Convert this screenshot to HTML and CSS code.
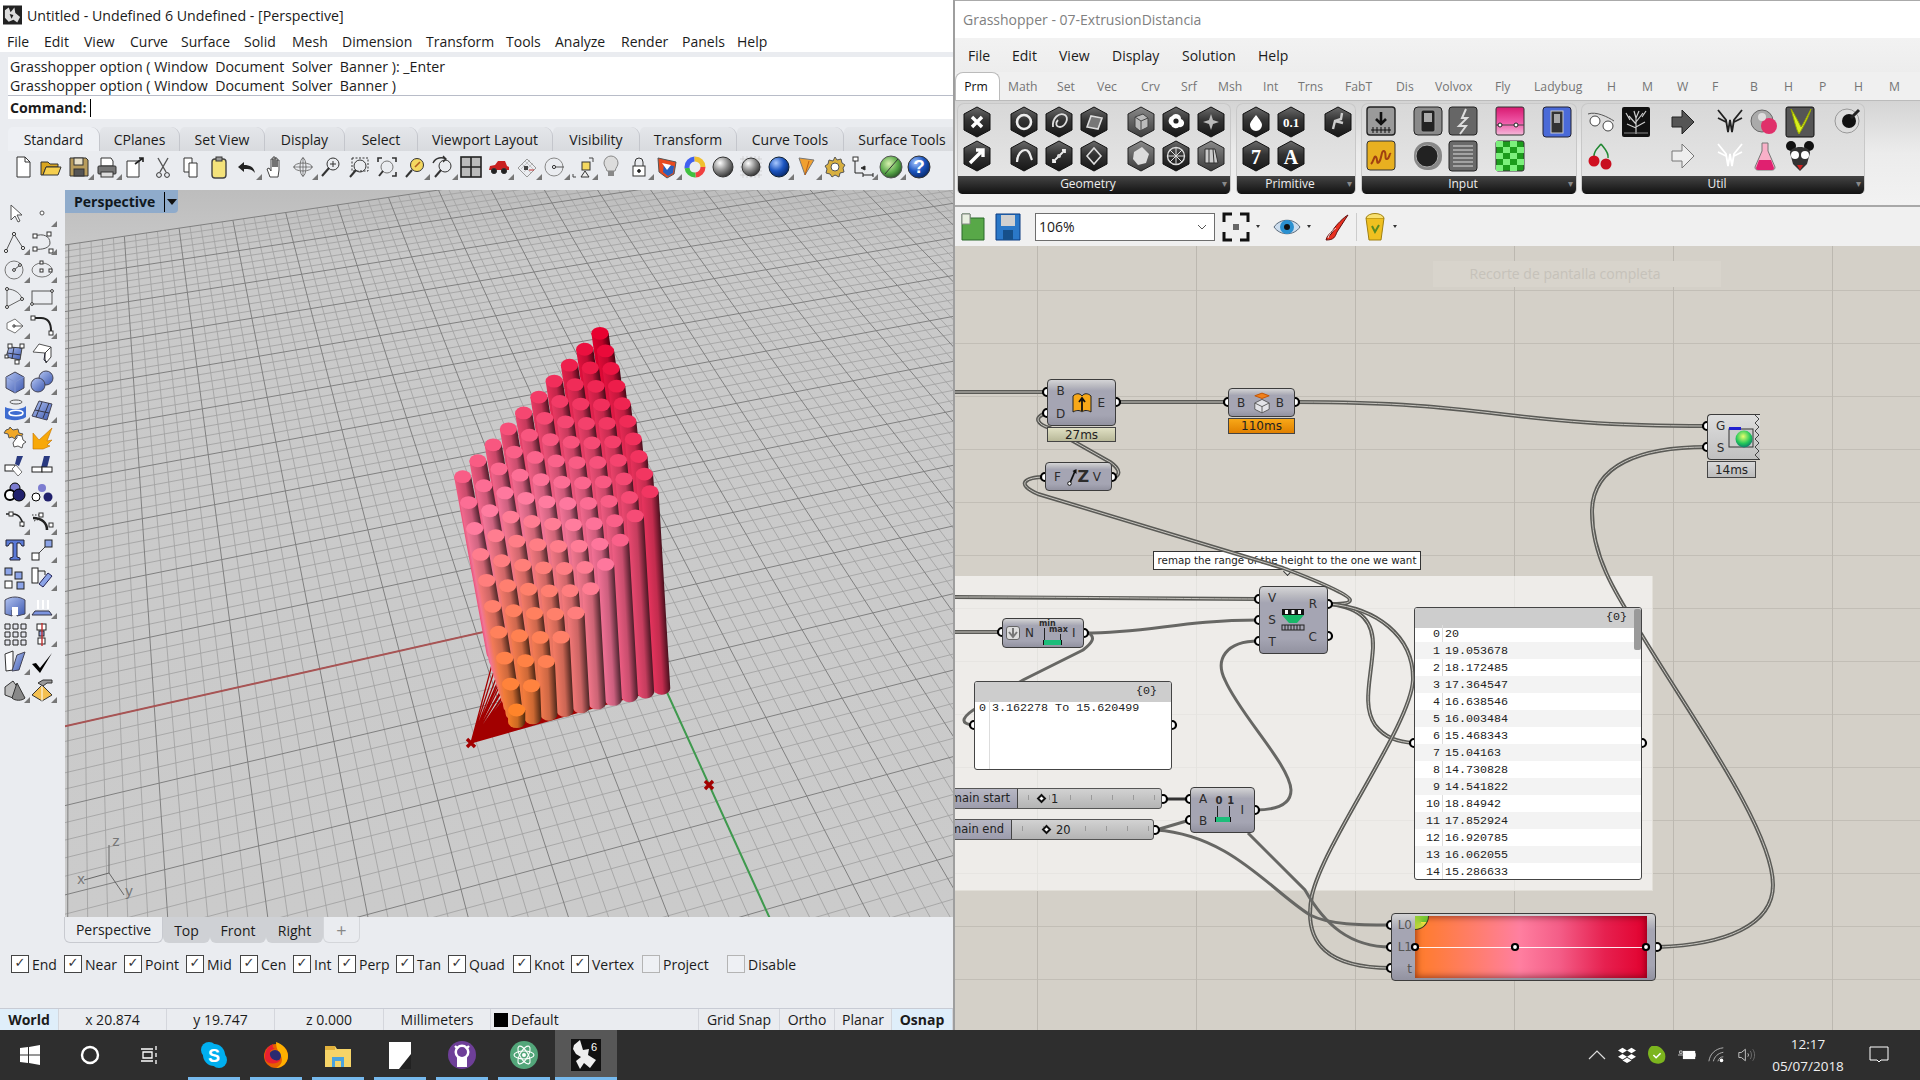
FILE: index.html
```html
<!DOCTYPE html>
<html lang="en">
<head>
<meta charset="utf-8">
<title>Rhino and Grasshopper</title>
<link rel="stylesheet" href="styles.css">
</head>
<body>
<svg class="defs" width="0" height="0">
  <defs>
    <linearGradient id="hexg" x1="0" y1="0" x2="0" y2="1"><stop offset="0" stop-color="#6a6a6a"/><stop offset=".45" stop-color="#333"/><stop offset="1" stop-color="#161616"/></linearGradient>
    <linearGradient id="hexl" x1="0" y1="0" x2="0" y2="1"><stop offset="0" stop-color="#8a8a8a"/><stop offset="1" stop-color="#3c3c3c"/></linearGradient>
    <linearGradient id="blue" x1="0" y1="0" x2="1" y2="1"><stop offset="0" stop-color="#b4c5f2"/><stop offset="1" stop-color="#3c58b0"/></linearGradient>
    <linearGradient id="pinkg" x1="0" y1="0" x2="0" y2="1"><stop offset="0" stop-color="#d81a70"/><stop offset=".55" stop-color="#f058a8"/><stop offset="1" stop-color="#f4b8d8"/></linearGradient>
    <radialGradient id="ball" cx=".35" cy=".3" r=".8"><stop offset="0" stop-color="#fff"/><stop offset=".5" stop-color="#8a8a8a"/><stop offset="1" stop-color="#222"/></radialGradient>
    <radialGradient id="bball" cx=".35" cy=".3" r=".8"><stop offset="0" stop-color="#a8c8ff"/><stop offset=".5" stop-color="#1c55c0"/><stop offset="1" stop-color="#04205c"/></radialGradient>
    <radialGradient id="gball" cx=".4" cy=".35" r=".7"><stop offset="0" stop-color="#d8f0b0"/><stop offset=".6" stop-color="#58a848"/><stop offset="1" stop-color="#244c24"/></radialGradient>
    <radialGradient id="sball" cx=".45" cy=".35" r=".7"><stop offset="0" stop-color="#e8ff70"/><stop offset=".6" stop-color="#22c75a"/><stop offset="1" stop-color="#0a6a70"/></radialGradient>
    <polygon id="hex" points="15,1 28,8 28,24 15,31 2,24 2,8" fill="url(#hexg)" stroke="#111"/>
    <polygon id="hexlt" points="15,1 28,8 28,24 15,31 2,24 2,8" fill="url(#hexl)" stroke="#222"/>
  </defs>
</svg>

<div class="screen">
  <div class="windows">
    <section class="rhino">
      <div class="titlebar">
        <svg class="appicon" viewBox="0 0 20 20"><rect width="20" height="20" fill="#222"/><path d="M2 5l4-3 2 5 4-5 1 6 5 4-3 6-4-3-5 2-4-4z" fill="#ddd"/><path d="M7 9l4 1-2 4z" fill="#222"/></svg>
        <span>Untitled - Undefined 6 Undefined - [Perspective]</span>
      </div>
      <nav class="menu">
        <span>File</span><span>Edit</span><span>View</span><span>Curve</span><span>Surface</span><span>Solid</span><span>Mesh</span><span>Dimension</span><span>Transform</span><span>Tools</span><span>Analyze</span><span>Render</span><span>Panels</span><span>Help</span>
      </nav>
      <div class="cmdwrap">
        <div class="cmd">
          <div class="cmdline">Grasshopper option ( Window&nbsp; Document&nbsp; Solver&nbsp; Banner ): _Enter</div>
          <div class="cmdline cmdline-last">Grasshopper option ( Window&nbsp; Document&nbsp; Solver&nbsp; Banner )</div>
          <div class="cmdprompt"><b>Command:</b><span class="caret"></span></div>
        </div>
      </div>
      <div class="tabs">
        <span class="tab active">Standard</span><span class="tab">CPlanes</span><span class="tab">Set View</span><span class="tab">Display</span><span class="tab">Select</span><span class="tab">Viewport Layout</span><span class="tab">Visibility</span><span class="tab">Transform</span><span class="tab">Curve Tools</span><span class="tab">Surface Tools</span>
      </div>
      <div class="stdbar">
        <i class="ic"><svg viewBox="0 0 24 24"><path d="M6 2h8l5 5v15H6z" fill="#fff"/><path d="M14 2v5h5"/></svg></i>
        <i class="ic"><svg viewBox="0 0 24 24"><path d="M2 7h7l2 2h8v3H7l-3 8H2z" fill="#d9a520"/><path d="M7 12h15l-3 8H4z" fill="#f6cf50"/></svg></i>
        <i class="ic fly"><svg viewBox="0 0 24 24"><path d="M3 3h16l2 2v16H3z" fill="#b89c5c"/><rect x="7" y="3" width="9" height="7" fill="#e8e0c8"/><rect x="7" y="14" width="10" height="7" fill="#555"/></svg></i>
        <i class="ic fly"><svg viewBox="0 0 24 24"><path d="M6 11V3h10l2 3v5z" fill="#fff"/><rect x="3" y="11" width="18" height="8" rx="1" fill="#777"/><rect x="6" y="17" width="12" height="5" fill="#ddd"/></svg></i>
        <i class="ic"><svg viewBox="0 0 24 24"><path d="M4 6h12v16H4z" fill="#fff"/><path d="M12 9l8-6m-4 0h4v4" stroke="#222" stroke-width="1.6"/></svg></i>
        <i class="ic"><svg viewBox="0 0 24 24"><path d="M7 3l8 14m2-14L9 17" stroke="#555" stroke-width="1.4"/><circle cx="8" cy="20" r="2.4"/><circle cx="16" cy="20" r="2.4"/></svg></i>
        <i class="ic"><svg viewBox="0 0 24 24"><path d="M5 3h8v14H5z" fill="#fff"/><path d="M10 8h8v14h-8z" fill="#fff"/></svg></i>
        <i class="ic"><svg viewBox="0 0 24 24"><rect x="5" y="4" width="14" height="19" rx="3" fill="#f4e27a" stroke="#444" stroke-width="1.4"/><rect x="9" y="2" width="6" height="4" fill="#999"/></svg></i>
        <i class="ic fly"><svg viewBox="0 0 24 24"><path d="M3 12l6-5v3c6 0 10 2 11 8-3-4-6-4-11-4v3z" fill="#222" stroke="none"/></svg></i>
        <i class="ic"><svg viewBox="0 0 24 24"><path d="M7 22l-3-8 2-1 2 3V4h2v8-10h2v10V3h2v9-7h2v10l-1 7z" fill="#fff" stroke="#444"/></svg></i>
        <i class="ic fly"><svg viewBox="0 0 24 24"><ellipse cx="12" cy="12" rx="9" ry="4" stroke="#777"/><ellipse cx="12" cy="12" rx="3" ry="9" stroke="#777"/><path d="M12 2v20M2 12h20" stroke="#444" stroke-width=".6"/></svg></i>
        <i class="ic"><svg viewBox="0 0 24 24"><circle cx="14" cy="9" r="6"/><path d="M10 13l-7 8" stroke-width="2"/><path d="M14 6v6m-3-3h6"/></svg></i>
        <i class="ic"><svg viewBox="0 0 24 24"><circle cx="13" cy="11" r="6"/><path d="M9 15l-6 7" stroke-width="2"/><rect x="5" y="3" width="16" height="13" stroke-dasharray="2 1.5"/></svg></i>
        <i class="ic"><svg viewBox="0 0 24 24"><circle cx="12" cy="12" r="6" stroke="#777"/><path d="M8 16l-4 5" stroke-width="2"/><path d="M3 7V3h4m10 0h4v4m0 10v4h-4M7 21" stroke-width="1.6"/></svg></i>
        <i class="ic fly"><svg viewBox="0 0 24 24"><circle cx="14" cy="10" r="6.5" fill="#f4d860"/><path d="M9 15l-6 7" stroke-width="2"/><path d="M12 12l5-5" stroke="#b06020" stroke-width="1.6"/></svg></i>
        <i class="ic fly"><svg viewBox="0 0 24 24"><circle cx="14" cy="11" r="6"/><path d="M10 15l-6 7" stroke-width="2"/><path d="M2 8c3-6 9-6 13-4m-3-3l3 3-3 3" stroke-width="1.4"/></svg></i>
        <i class="ic"><svg viewBox="0 0 24 24"><rect x="2" y="2" width="20" height="20" fill="#bbb" stroke="#222" stroke-width="1.6"/><path d="M12 2v20M2 12h20" stroke="#222" stroke-width="1.6"/></svg></i>
        <i class="ic fly"><svg viewBox="0 0 24 24"><path d="M2 15l1-4 5-1 3-4h7l2 5 2 1v3z" fill="#c82020" stroke="none"/><circle cx="7" cy="16" r="2.6" fill="#222"/><circle cx="17" cy="16" r="2.6" fill="#222"/></svg></i>
        <i class="ic fly"><svg viewBox="0 0 24 24"><path d="M3 13l9-9 9 9-9 9z" stroke="#999"/><path d="M7 9l9 9M10 6l9 9M15 5l-9 9M18 8l-9 9" stroke="#bbb" stroke-width=".8"/><rect x="9" y="11" width="4" height="4" fill="#444" stroke="none"/><path d="M14 15h5" stroke="#c03030"/></svg></i>
        <i class="ic fly"><svg viewBox="0 0 24 24"><circle cx="11" cy="12" r="9" stroke="#888"/><circle cx="11" cy="12" r="1.6"/><path d="M13 12h8" stroke="#555"/></svg></i>
        <i class="ic fly"><svg viewBox="0 0 24 24"><rect x="11" y="7" width="8" height="8" fill="#f4d860"/><path d="M14 16l-4 6h8z" fill="#eee"/><path d="M18 3h4v4M5 22H2v-3" stroke="#444"/></svg></i>
        <i class="ic"><svg viewBox="0 0 24 24"><path d="M8 16c-1-4-3-5-3-8a7 7 0 0 1 14 0c0 3-2 4-3 8z" fill="#dcdcdc" stroke="#888"/><rect x="9" y="16" width="6" height="5" fill="#888" stroke="none"/></svg></i>
        <i class="ic fly"><svg viewBox="0 0 24 24"><rect x="6" y="11" width="12" height="10" fill="#fff"/><path d="M8 11V7a4 4 0 0 1 8 0v4"/><circle cx="12" cy="16" r="1.4" fill="#222"/></svg></i>
        <i class="ic fly"><svg viewBox="0 0 24 24"><path d="M3 3l18 4-2 12-7 4-8-6z" fill="#e84a20" stroke="#555"/><path d="M9 9l10 2-1 7-5 3-5-4z" fill="#2860c0" stroke="none"/><path d="M7 8l9 2-4 5z" fill="#fff" stroke="none"/></svg></i>
        <i class="ic"><svg viewBox="0 0 24 24"><circle cx="12" cy="12" r="8" stroke-width="5" stroke="#f04040" stroke-dasharray="12 38"/><circle cx="12" cy="12" r="8" stroke-width="5" stroke="#40c040" stroke-dasharray="12 38" stroke-dashoffset="-12"/><circle cx="12" cy="12" r="8" stroke-width="5" stroke="#4060f0" stroke-dasharray="13 38" stroke-dashoffset="-24"/><circle cx="12" cy="12" r="8" stroke-width="5" stroke="#f0c030" stroke-dasharray="13 38" stroke-dashoffset="-37"/></svg></i>
        <i class="ic"><svg viewBox="0 0 24 24"><circle cx="12" cy="12" r="10" fill="url(#ball)" stroke="#333"/></svg></i>
        <i class="ic"><svg viewBox="0 0 24 24"><path d="M1 4h22M1 8h22M1 12h22M1 16h22M1 20h22M4 1v22M8 1v22M12 1v22M16 1v22M20 1v22" stroke="#bbb" stroke-width=".5"/><circle cx="12" cy="12" r="9" fill="url(#ball)" stroke="#333"/></svg></i>
        <i class="ic fly"><svg viewBox="0 0 24 24"><circle cx="12" cy="12" r="10" fill="url(#bball)" stroke="#123"/></svg></i>
        <i class="ic fly"><svg viewBox="0 0 24 24"><path d="M4 3l15 2-9 15z" fill="#f0a030" stroke="#777"/><path d="M10 20L14 6" stroke="#c06010"/></svg></i>
        <i class="ic"><svg viewBox="0 0 24 24"><path d="M12 2l2 3 4-1 1 4 3 2-2 3 1 4-4 1-1 4-4-2-3 2-2-3-4-1 1-4-2-3 3-2 1-4 4 1z" fill="#d8b040" stroke="#555"/><circle cx="12" cy="12" r="4" fill="#fff" stroke="#555"/></svg></i>
        <i class="ic fly"><svg viewBox="0 0 24 24"><rect x="2" y="2" width="5" height="4" fill="#fff"/><path d="M4 6v12h8M12 18v4M22 18v4M12 20h10" stroke="#222"/><path d="M10 13l4-2v4z" fill="#222"/></svg></i>
        <i class="ic fly"><svg viewBox="0 0 24 24"><circle cx="12" cy="12" r="11" fill="url(#gball)" stroke="#555"/><path d="M12 12l7-8M12 12l-6 7" stroke="#333"/></svg></i>
        <i class="ic"><svg viewBox="0 0 24 24"><circle cx="12" cy="12" r="11" fill="url(#bball)"/><text x="12" y="18" text-anchor="middle" class="helpq">?</text></svg></i>
      </div>

      <div class="midrow">
        <aside class="sidebar">
          <i class="ic"><svg viewBox="0 0 24 24"><path d="M8 3v15l4-4 3 6 2-1-3-6h5z" fill="#fff" stroke="#555"/></svg></i>
          <i class="ic fly"><svg viewBox="0 0 24 24"><circle cx="12" cy="11" r="2" fill="#fff" stroke="#555"/></svg></i>
          <i class="ic fly"><svg viewBox="0 0 24 24"><path d="M3 21L11 4l9 14" stroke="#555"/><circle cx="3" cy="21" r="1.6" fill="#fff"/><circle cx="11" cy="4" r="1.6" fill="#fff"/><circle cx="20" cy="18" r="1.6" fill="#fff"/></svg></i>
          <i class="ic fly"><svg viewBox="0 0 24 24"><path d="M5 6c8-3 15 0 15 7 0 5-8 7-15 6" stroke="#555"/><rect x="3" y="4" width="4" height="4" fill="#fff"/><rect x="3" y="17" width="4" height="4" fill="#fff"/><rect x="17" y="2" width="4" height="4" fill="#fff"/><rect x="19" y="19" width="4" height="4" fill="#fff"/></svg></i>
          <i class="ic fly"><svg viewBox="0 0 24 24"><circle cx="11" cy="12" r="9" stroke="#777"/><path d="M11 12l6-5" stroke="#444"/><circle cx="11" cy="12" r="1.4" fill="#fff"/><circle cx="17" cy="7" r="1.4" fill="#fff"/></svg></i>
          <i class="ic fly"><svg viewBox="0 0 24 24"><ellipse cx="12" cy="12" rx="10" ry="7" stroke="#777"/><rect x="10" y="3" width="3" height="3" fill="#fff"/><rect x="10" y="11" width="3" height="3" fill="#fff"/><rect x="19" y="11" width="3" height="3" fill="#fff"/></svg></i>
          <i class="ic fly"><svg viewBox="0 0 24 24"><path d="M4 3c8 0 14 5 15 10L4 21z" stroke="#666"/><circle cx="4" cy="3" r="1.5" fill="#fff"/><circle cx="19" cy="13" r="1.5" fill="#fff"/><circle cx="4" cy="21" r="1.5" fill="#fff"/></svg></i>
          <i class="ic fly"><svg viewBox="0 0 24 24"><rect x="2" y="5" width="20" height="13" stroke="#555"/><circle cx="2" cy="18" r="1.4" fill="#fff"/><circle cx="22" cy="5" r="1.4" fill="#fff"/></svg></i>
          <i class="ic fly"><svg viewBox="0 0 24 24"><path d="M12 5l8 7-8 7-8-4V9z" fill="#fff" stroke="#777"/><circle cx="11" cy="12" r="1.2" fill="#fff"/><path d="M11 12h9" stroke="#555"/></svg></i>
          <i class="ic fly"><svg viewBox="0 0 24 24"><path d="M3 4h8c6 0 10 4 10 13" stroke="#222" stroke-width="2"/><rect x="1" y="2" width="4" height="4" fill="#fff"/><rect x="19" y="17" width="4" height="4" fill="#fff"/></svg></i>
          <i class="ic fly"><svg viewBox="0 0 24 24"><path d="M6 5l13 1-2 12-14-3z" fill="url(#blue)" stroke="#444"/><path d="M11 5l-2 12M4 11l14 2" stroke="#334"/><rect x="5" y="2" width="4" height="4" fill="#fff"/><rect x="17" y="2" width="4" height="4" fill="#fff"/><rect x="2" y="13" width="3" height="3" fill="#fff"/><rect x="12" y="18" width="4" height="4" fill="#fff"/></svg></i>
          <i class="ic fly"><svg viewBox="0 0 24 24"><path d="M3 10l6-8 12 3-6 6z" fill="#fff" stroke="#555"/><path d="M15 11l6-6v10l-5 6-1-4z" fill="#fff" stroke="#444"/><path d="M15 11l-1 7 3 2" stroke="#223"/></svg></i>
          <i class="ic fly"><svg viewBox="0 0 24 24"><path d="M3 7l9-5 9 5v11l-9 5-9-5z" fill="url(#blue)" stroke="#445"/><path d="M3 7l9 5 9-5M12 12v11" stroke="#8094d0"/></svg></i>
          <i class="ic fly"><svg viewBox="0 0 24 24"><circle cx="16" cy="8" r="7" fill="url(#blue)" stroke="#445"/><circle cx="8" cy="15" r="7" fill="url(#blue)" stroke="#445"/></svg></i>
          <i class="ic fly"><svg viewBox="0 0 24 24"><ellipse cx="13" cy="4" rx="6" ry="2" stroke="#555"/><path d="M2 9c6 3 17 3 21-1v11c-5 4-16 4-21 1z" fill="#3e6cd0" stroke="none"/><ellipse cx="13" cy="15" rx="7" ry="2.8" stroke="#fff" stroke-width="1.6"/></svg></i>
          <i class="ic fly"><svg viewBox="0 0 24 24"><path d="M9 3l13 3-5 16L2 18z" fill="url(#blue)" stroke="#445"/><path d="M12 4l-6 15M19 5l-6 15M5 12l14 3" stroke="#334"/></svg></i>
          <i class="ic"><svg viewBox="0 0 24 24"><path d="M7 1l3 3 5-1 1 4 4 1-2 3-5-1-1 3-3-2-3 1-1-4-4-1 2-3 3-1z" fill="#f0a828" stroke="#555"/><path d="M14 9l5 1 1 4 3 2-3 2-1 4-4-2-4 1-1-4 2-3 2-2z" fill="#fff" stroke="#555"/></svg></i>
          <i class="ic"><svg viewBox="0 0 24 24"><path d="M3 23V7l6 7L22 2 17 15l5-1-5 5 3 1-7 3z" fill="#f8a808" stroke="#c07000" stroke-width=".6"/></svg></i>
          <i class="ic"><svg viewBox="0 0 24 24"><path d="M14 2h6l-4 10-4-2z" fill="#2a3a80" stroke="none"/><rect x="2" y="11" width="10" height="6" fill="#fff" stroke="#222"/><path d="M13 11l6 7-4 4-6-7z" fill="#fff" stroke="#777"/></svg></i>
          <i class="ic"><svg viewBox="0 0 24 24"><path d="M14 2h6l-3 12h-6z" fill="#2a3a80" stroke="none"/><rect x="2" y="13" width="10" height="5" fill="#fff" stroke="#222"/><rect x="12" y="13" width="10" height="5" fill="#fff" stroke="#222"/></svg></i>
          <i class="ic fly"><svg viewBox="0 0 24 24"><circle cx="12" cy="6" r="5" fill="#7c7cd0" stroke="#000"/><circle cx="7" cy="13" r="5" fill="#fff" stroke="#000" stroke-width="2"/><circle cx="16" cy="13" r="6" fill="#20206c" stroke="#000"/></svg></i>
          <i class="ic fly"><svg viewBox="0 0 24 24"><circle cx="12" cy="6" r="4" fill="#7c7cd0" stroke="none"/><circle cx="6" cy="15" r="4" fill="#fff" stroke="#000"/><circle cx="18" cy="15" r="4.5" fill="#20206c" stroke="none"/></svg></i>
          <i class="ic fly"><svg viewBox="0 0 24 24"><path d="M3 4h7c6 0 10 6 10 13" stroke="#222" stroke-width="1.6"/><rect x="6" y="2" width="4" height="4" fill="#fff"/><rect x="17" y="12" width="4" height="4" fill="#fff"/></svg></i>
          <i class="ic fly"><svg viewBox="0 0 24 24"><path d="M2 5h8M4 11c8-4 13 1 13 10" stroke-dasharray="1.5 1.5"/><path d="M3 8c9 0 14 5 14 12" stroke="#222" stroke-width="2.6"/><rect x="9" y="3" width="4" height="4" fill="#fff"/><rect x="19" y="13" width="4" height="4" fill="#fff"/></svg></i>
          <i class="ic"><svg viewBox="0 0 24 24"><path d="M3 2h18v6h-2l-2-3h-3v14l3 1v2H7v-2l3-1V5H7L5 8H3z" fill="#5a7ad8" stroke="#223"/></svg></i>
          <i class="ic fly"><svg viewBox="0 0 24 24"><rect x="2" y="15" width="7" height="7" fill="#fff" stroke="#222"/><path d="M9 15l8-8" stroke="#444"/><rect x="15" y="2" width="7" height="7" fill="#8ca4e8" stroke="#222"/></svg></i>
          <i class="ic"><svg viewBox="0 0 24 24"><rect x="2" y="2" width="7" height="7" fill="#8ca4e8" stroke="#222"/><rect x="12" y="6" width="7" height="7" fill="#8ca4e8" stroke="#222"/><rect x="2" y="15" width="7" height="7" fill="#fff" stroke="#222"/><rect x="14" y="16" width="7" height="7" fill="#8ca4e8" stroke="#222"/></svg></i>
          <i class="ic fly"><svg viewBox="0 0 24 24"><rect x="2" y="2" width="6" height="15" fill="#fff" stroke="#222"/><path d="M13 21l9-11-4-3-9 11z" fill="#8ca4e8" stroke="#225"/><path d="M8 5h7v4" stroke="#222"/></svg></i>
          <i class="ic fly"><svg viewBox="0 0 24 24"><path d="M2 6c6-4 14-4 20 0v14l-8 2v-6H9v6l-7-2z" fill="url(#blue)" stroke="#445"/><rect x="9" y="13" width="6" height="8" fill="#fff" stroke="none"/></svg></i>
          <i class="ic fly"><svg viewBox="0 0 24 24"><path d="M2 21h20l-3-4H5z" fill="#7c94e0" stroke="#334"/><path d="M8 6v9M13 6v9M18 6v9" stroke="#fff" stroke-width="2"/></svg></i>
          <i class="ic"><svg viewBox="0 0 24 24"><path d="M2 2h5v5H2zM10 2h5v5h-5zM18 2h5v5h-5zM2 10h5v5H2zM10 10h5v5h-5zM18 10h5v5h-5zM2 18h5v5H2zM10 18h5v5h-5zM18 18h5v5h-5z" fill="#e4e6ee" stroke="#222"/></svg></i>
          <i class="ic fly"><svg viewBox="0 0 24 24"><rect x="7" y="2" width="9" height="6" fill="#fff" stroke="#222"/><rect x="9" y="9" width="5" height="5" fill="#8ca4e8" stroke="#222"/><rect x="8" y="16" width="7" height="6" fill="#fff" stroke="#222"/><path d="M12 1v23" stroke="#c03030" stroke-width="1.4"/></svg></i>
          <i class="ic fly"><svg viewBox="0 0 24 24"><path d="M2 4l8-3v19L3 21z" fill="#fff" stroke="#333"/><path d="M9 21l5-16 8-3-6 18z" fill="url(#blue)" stroke="#445"/></svg></i>
          <i class="ic"><svg viewBox="0 0 24 24"><path d="M2 14l4-1 4 5L22 3 10 23z" fill="#000" stroke="none"/></svg></i>
          <i class="ic fly"><svg viewBox="0 0 24 24"><path d="M2 9l8-6 5 7-5 10-8-3z" fill="#bbb" stroke="#333"/><path d="M14 5l8 15c-3 3-10 3-13 0z" fill="#888" stroke="#333"/></svg></i>
          <i class="ic fly"><svg viewBox="0 0 24 24"><path d="M12 7L2 17l10 6 10-6z" fill="#f4c050" stroke="#333"/><path d="M12 7v16" stroke="#fff"/><path d="M8 5l5-3h9v3h-5l-4 3z" fill="#999" stroke="#333"/></svg></i>
        </aside>
        <div class="viewport">
          <svg id="scene" class="scene" viewBox="65 190 888 727"></svg>
          <div class="vp-tab"><span>Perspective</span><span class="vp-drop"></span></div>
        </div>
      </div>
      <div class="viewtabs">
        <span class="vtab active">Perspective</span><span class="vtab">Top</span><span class="vtab">Front</span><span class="vtab">Right</span><span class="vtab vtab-plus">+</span>
      </div>
      <div class="osnap">
        <label class="snap on">End</label><label class="snap on">Near</label><label class="snap on">Point</label><label class="snap on">Mid</label><label class="snap on">Cen</label><label class="snap on">Int</label><label class="snap on">Perp</label><label class="snap on">Tan</label><label class="snap on">Quad</label><label class="snap on">Knot</label><label class="snap on">Vertex</label><label class="snap">Project</label><label class="snap">Disable</label>
      </div>
      <div class="status">
        <span class="st st-on"><b>World</b></span><span class="st">x 20.874</span><span class="st">y 19.747</span><span class="st">z 0.000</span><span class="st">Millimeters</span><span class="st st-layer"><i class="swatch"></i>Default</span><span class="st">Grid Snap</span><span class="st">Ortho</span><span class="st">Planar</span><span class="st st-on"><b>Osnap</b></span>
      </div>
    </section>

    <section class="gh">
      <div class="gh-title">Grasshopper - 07-ExtrusionDistancia</div>
      <nav class="gh-menu"><span>File</span><span>Edit</span><span>View</span><span>Display</span><span>Solution</span><span>Help</span></nav>
      <div class="gh-tabs">
        <span class="gh-tab active">Prm</span><span>Math</span><span>Set</span><span>Vec</span><span>Crv</span><span>Srf</span><span>Msh</span><span>Int</span><span>Trns</span><span>FabT</span><span>Dis</span><span>Volvox</span><span>Fly</span><span>Ladybug</span><span>H</span><span>M</span><span>W</span><span>F</span><span>B</span><span>H</span><span>P</span><span>H</span><span>M</span>
      </div>
      <div class="ribbon">
        <div class="rpanel rp-geo">
          <div class="rbody">
            <div class="rgroup">
              <i class="ri"><svg viewBox="0 0 30 32"><use href="#hex"/><path d="M10 11l10 10m0-10L10 21" stroke="#fff" stroke-width="3.4"/></svg></i>
              <i class="ri"><svg viewBox="0 0 30 32"><use href="#hex"/><path d="M8 23L21 10m-7 0h7v7" stroke="#fff" stroke-width="3.4"/></svg></i>
            </div>
            <div class="rgroup">
              <i class="ri"><svg viewBox="0 0 30 32"><use href="#hex"/><circle cx="15" cy="16" r="7" stroke="#eee" stroke-width="2.6"/></svg></i>
              <i class="ri"><svg viewBox="0 0 30 32"><use href="#hex"/><path d="M8 22c0-8 5-12 8-12 5 0 5 6 7 10" stroke="#eee" stroke-width="2.2"/></svg></i>
              <i class="ri"><svg viewBox="0 0 30 32"><use href="#hex"/><path d="M9 21C8 12 15 6 21 9c4 3 1 11-5 12-4 0-5-4-2-7" stroke="#ddd" stroke-width="1.8"/></svg></i>
              <i class="ri"><svg viewBox="0 0 30 32"><use href="#hex"/><path d="M9 22L21 10m-3 0h3v3M9 19v3h3" stroke="#eee" stroke-width="1.8"/><circle cx="15" cy="16" r="2" fill="#ddd"/></svg></i>
              <i class="ri"><svg viewBox="0 0 30 32"><use href="#hex"/><path d="M8 21l4-11 11 2-4 11z" stroke="#ddd" stroke-width="1.6" fill="#777"/></svg></i>
              <i class="ri"><svg viewBox="0 0 30 32"><use href="#hex"/><path d="M15 8l7 8-7 8-7-8z" stroke="#ddd" stroke-width="1.6"/></svg></i>
            </div>
            <div class="rgroup">
              <i class="ri"><svg viewBox="0 0 30 32"><use href="#hexlt"/><path d="M9 11l8-3 5 4v9l-8 4-5-4z" fill="#bbb" stroke="#444"/><path d="M9 11l6 4 7-3M15 15v10" stroke="#444"/></svg></i>
              <i class="ri"><svg viewBox="0 0 30 32"><use href="#hexlt"/><path d="M8 12l8-5 7 7-3 9-8 2-5-6z" fill="#ddd"/></svg></i>
              <i class="ri"><svg viewBox="0 0 30 32"><use href="#hex"/><path d="M11 10a5 5 0 0 1 9 3 4 4 0 0 1-2 8 5 5 0 0 1-8-2 5 5 0 0 1 1-9z" fill="#fff"/><circle cx="15" cy="15" r="2.6" fill="#222"/></svg></i>
              <i class="ri"><svg viewBox="0 0 30 32"><use href="#hex"/><circle cx="15" cy="16" r="8.5" stroke="#ddd" stroke-width="1.4"/><path d="M15 7v18M7 16h16M9 10l12 12M21 10L9 22" stroke="#ddd"/></svg></i>
              <i class="ri"><svg viewBox="0 0 30 32"><use href="#hex"/><path d="M15 8l2 6 6 2-6 2-2 6-2-6-6-2 6-2z" fill="#bbb"/></svg></i>
              <i class="ri"><svg viewBox="0 0 30 32"><use href="#hexlt"/><path d="M9 9h10l3 14H9z" fill="#ccc" stroke="#333"/><path d="M13 9v14M17 9l1 14" stroke="#333"/></svg></i>
            </div>
          </div>
          <div class="rlabel">Geometry</div>
        </div>
        <div class="rpanel rp-pri">
          <div class="rbody">
            <div class="rgroup">
              <i class="ri"><svg viewBox="0 0 30 32"><use href="#hex"/><path d="M15 9c4 5 6 8 6 10a6 6 0 0 1-12 0c0-3 3-6 6-10z" fill="#fff"/></svg></i>
              <i class="ri"><svg viewBox="0 0 30 32"><use href="#hex"/><text x="15" y="24" class="hxt">7</text></svg></i>
              <i class="ri"><svg viewBox="0 0 30 32"><use href="#hex"/><text x="15" y="21" class="hxt hxs">0.1</text></svg></i>
              <i class="ri"><svg viewBox="0 0 30 32"><use href="#hex"/><text x="15" y="24" class="hxt">A</text></svg></i>
            </div>
            <div class="rgroup">
              <i class="ri"><svg viewBox="0 0 30 32"><use href="#hex"/><path d="M10 23l2-8 6-2 1-6M12 15l8 2" stroke="#ccc" stroke-width="2.4"/></svg></i>
              <i class="ri"></i>
            </div>
          </div>
          <div class="rlabel">Primitive</div>
        </div>
        <div class="rpanel rp-inp">
          <div class="rbody">
            <div class="rgroup">
              <i class="ri"><svg viewBox="0 0 30 32"><rect x="1" y="1" width="28" height="28" rx="3" fill="#9a9a9a" stroke="#222" stroke-width="1.4"/><path d="M15 6v12m-5-5l5 5 5-5" stroke="#111" stroke-width="2.6"/><path d="M5 24h20M7 21v6M11 21v6M15 21v6M19 21v6M23 21v6" stroke="#111"/></svg></i>
              <i class="ri"><svg viewBox="0 0 30 32"><rect x="1" y="1" width="28" height="29" rx="3" fill="#e8b020" stroke="#333"/><path d="M5 24c3-3 3-9 5-7s0 8 3 5 2-12 5-11 0 9 3 8 2-6 4-5" stroke="#a04010" stroke-width="2"/></svg></i>
            </div>
            <div class="rgroup">
              <i class="ri"><svg viewBox="0 0 30 32"><rect x="1" y="1" width="28" height="28" rx="4" fill="#8a8a8a" stroke="#222"/><rect x="8" y="4" width="14" height="22" rx="2" fill="#222" stroke="#999"/><rect x="11" y="7" width="8" height="9" fill="#aaa"/></svg></i>
              <i class="ri"><svg viewBox="0 0 30 32"><rect x="1" y="2" width="28" height="28" rx="13" fill="#888"/><circle cx="14" cy="16" r="11" fill="#222" stroke="#aaa"/></svg></i>
              <i class="ri"><svg viewBox="0 0 30 32"><rect x="1" y="1" width="28" height="28" rx="3" fill="#666" stroke="#222"/><path d="M18 3l-4 9h5l-8 8h7l-6 8" stroke="#ddd" stroke-width="2"/></svg></i>
              <i class="ri"><svg viewBox="0 0 30 32"><rect x="1" y="1" width="28" height="30" rx="3" fill="#6a6a6a" stroke="#222"/><path d="M5 8h20M5 16h20M5 24h20" stroke="#ddd" stroke-width="5"/><path d="M5 8h20M5 16h20M5 24h20" stroke="#666" stroke-width="3"/></svg></i>
            </div>
            <div class="rgroup">
              <i class="ri"><svg viewBox="0 0 30 32"><rect x="1" y="1" width="28" height="28" rx="2" fill="url(#pinkg)" stroke="#333"/><path d="M1 19h28" stroke="#444"/><circle cx="5" cy="19" r="2" fill="#fff" stroke="#222"/><circle cx="21" cy="19" r="2" fill="#fff" stroke="#222"/></svg></i>
              <i class="ri"><svg viewBox="0 0 30 32"><rect x="1" y="1" width="28" height="30" rx="2" fill="#1c9c1c" stroke="#333"/><path d="M1 1h7v6H1zM15 1h7v6h-7zM8 7h7v6H8zM22 7h7v6h-7zM1 13h7v6H1zM15 13h7v6h-7zM8 19h7v6H8zM22 19h7v6h-7zM1 25h7v6H1zM15 25h7v6h-7z" fill="#7cf07c"/></svg></i>
            </div>
            <div class="rgroup">
              <i class="ri"><svg viewBox="0 0 30 32"><rect x="1" y="1" width="28" height="30" rx="3" fill="#4a6ad8" stroke="#223"/><rect x="9" y="5" width="12" height="22" fill="#333" stroke="#ccc"/><rect x="12" y="8" width="6" height="9" fill="#aaa"/></svg></i>
              <i class="ri"></i>
            </div>
          </div>
          <div class="rlabel">Input</div>
        </div>
        <div class="rpanel rp-utl">
          <div class="rbody">
            <div class="rgroup">
              <i class="ri"><svg viewBox="0 0 30 32"><path d="M2 8c8-3 20 3 26 7" stroke="#555"/><circle cx="9" cy="15" r="5" fill="#fff" stroke="#444"/><circle cx="22" cy="20" r="5" fill="#fff" stroke="#444"/></svg></i>
              <i class="ri"><svg viewBox="0 0 30 32"><path d="M15 4c-3 4-7 6-7 12M15 4c3 4 8 8 7 14" stroke="#283" stroke-width="1.6"/><circle cx="8" cy="21" r="5.5" fill="#d01020"/><circle cx="20" cy="24" r="5.5" fill="#c81020"/></svg></i>
              <i class="ri"><svg viewBox="0 0 30 32"><rect x="1" y="1" width="28" height="30" rx="2" fill="#111"/><path d="M15 28V12M15 18l-7-8M15 16l7-9M15 22l-9-4M15 21l9-5M9 14L5 7M21 11l4-6M15 12l-2-7M15 12l3-7" stroke="#ccc" stroke-width="1.2"/><path d="M3 27h24" stroke="#888"/></svg></i>
              <i class="ri"></i>
            </div>
            <div class="rgroup">
              <i class="ri"><svg viewBox="0 0 30 32"><path d="M4 11h10V4l12 12-12 12v-7H4z" fill="#555" stroke="#222"/></svg></i>
              <i class="ri"><svg viewBox="0 0 30 32"><path d="M4 11h10V4l12 12-12 12v-7H4z" fill="#eee" stroke="#777"/></svg></i>
            </div>
            <div class="rgroup">
              <i class="ri"><svg viewBox="0 0 30 32"><path d="M3 4l8 10 2 12 2-12 2 12 2-12 8-10M3 12l8 4m16-4l-8 4" stroke="#222" stroke-width="1.8"/></svg></i>
              <i class="ri"><svg viewBox="0 0 30 32"><path d="M3 4l8 10 2 12 2-12 2 12 2-12 8-10M3 12l8 4m16-4l-8 4" stroke="#fff" stroke-width="1.8"/></svg></i>
              <i class="ri"><svg viewBox="0 0 30 32"><circle cx="12" cy="15" r="11" fill="#aaa" stroke="#666"/><circle cx="19" cy="20" r="8" fill="#e0306a"/><circle cx="12" cy="11" r="4" fill="#ddd"/></svg></i>
              <i class="ri"><svg viewBox="0 0 30 32"><path d="M12 3h6v8l7 16c0 2-1 3-3 3H8c-2 0-3-1-3-3l7-16z" fill="#f8b0c8" stroke="#777"/><path d="M9 20h12l3 8c0 1-1 2-2 2H8c-1 0-2-1-2-2z" fill="#e02070"/></svg></i>
              <i class="ri"><svg viewBox="0 0 30 32"><rect x="1" y="1" width="28" height="30" rx="2" fill="#555" stroke="#111"/><path d="M6 3c3 10 5 20 8 25 3-5 9-15 12-25-5 9-8 16-10 18C14 17 10 9 6 3z" fill="#d8f020" stroke="#9a0"/></svg></i>
              <i class="ri"><svg viewBox="0 0 30 32"><circle cx="6" cy="6" r="5" fill="#111"/><circle cx="24" cy="6" r="5" fill="#111"/><path d="M5 13c0-8 20-8 20 0l-3 11-7 7-7-7z" fill="#333"/><circle cx="10" cy="15" r="4" fill="#fff"/><circle cx="20" cy="15" r="4" fill="#fff"/><path d="M12 25h6l-3 5z" fill="#d02020"/></svg></i>
            </div>
            <div class="rgroup">
              <i class="ri"><svg viewBox="0 0 30 32"><circle cx="15" cy="15" r="12" fill="#ddd" stroke="#999"/><circle cx="17" cy="15" r="7" fill="#111"/><path d="M19 12l8-8" stroke="#222" stroke-width="3"/></svg></i>
              <i class="ri"></i>
            </div>
          </div>
          <div class="rlabel">Util</div>
        </div>
      </div>
      <div class="gh-tools">
        <svg class="tool t-open" viewBox="0 0 26 30"><path d="M2 2h8v4h14v22H2z" fill="#58a848" stroke="#2a6a2a"/><path d="M2 2h8v10H2z" fill="#e8f0e0" stroke="#888"/></svg>
        <svg class="tool t-save" viewBox="0 0 26 30"><path d="M1 2h24v26H1z" fill="#2a78c8" stroke="#0a3a80"/><rect x="6" y="3" width="14" height="11" fill="#d0d0d0"/><rect x="8" y="18" width="10" height="10" fill="#16508a"/></svg>
        <div class="combo"><span>106%</span><svg viewBox="0 0 10 6"><path d="M1 1l4 4 4-4" stroke="#555" fill="none"/></svg></div>
        <svg class="tool t-fit" viewBox="0 0 28 30"><path d="M2 10V2h8M18 2h8v8M26 20v8h-8M10 28H2v-8" stroke="#111" stroke-width="3" fill="none"/><rect x="11" y="12" width="6" height="6" fill="#666"/></svg><i class="tdrop"></i>
        <svg class="tool t-eye" viewBox="0 0 28 26"><path d="M1 13c6-9 20-9 26 0-6 9-20 9-26 0z" fill="#cde" stroke="#567"/><circle cx="14" cy="13" r="7" fill="#2a90d0"/><circle cx="14" cy="13" r="3" fill="#111"/></svg><i class="tdrop"></i>
        <svg class="tool t-brush" viewBox="0 0 28 30"><path d="M3 28c8 0 9-3 11-8l11-17c-4 2-12 10-15 15-2 3-6 5-7 10z" fill="#e83020" stroke="#601010"/><path d="M5 26c2-6 6-8 8-10" stroke="#fdd"/></svg>
        <span class="tsep"></span>
        <svg class="tool t-bin" viewBox="0 0 24 30"><path d="M3 6h18l-3 22H6z" fill="#f0c020" stroke="#a08010"/><path d="M3 6c2-6 16-6 18 0" fill="#f8e070" stroke="#a08010"/><path d="M9 14l3 6 4-7" stroke="#5a8a20" stroke-width="2" fill="none"/></svg><i class="tdrop"></i>
      </div>

      <div class="canvas">
        <div class="toast">Recorte de pantalla completa</div>
        <div class="group"></div>
        <div class="tooltip">remap the range of the height to the one we want<i class="tooltip-tip"></i></div>

        <svg class="wires" viewBox="955 246 965 784">
          <defs>
            <path id="w1" d="M955 392H1047"/>
            <path id="w2" d="M1116 402H1228"/>
            <path id="w3" d="M1295 402C1500 402 1500 426 1707 426"/>
            <path id="w4" d="M1047 413C1032 417 1038 425 1050 428L1110 462C1122 470 1120 477 1112 477"/>
            <path id="w5" d="M1045 477C1025 477 1015 484 1038 494L1283 568C1320 582 1350 595 1350 600C1350 604 1340 604 1328 604"/>
            <path id="w6" d="M955 597C1100 597 1200 599 1259 599"/>
            <path id="w7" d="M955 632H1002"/>
            <path id="w8" d="M1330 604C1362 608 1374 622 1373 648C1371 680 1362 705 1375 725C1385 738 1398 742 1414 743"/>
            <path id="w9" d="M1330 604C1375 608 1414 635 1413 680C1411 725 1325 840 1312 895C1302 945 1330 968 1391 968"/>
            <path id="w10" d="M1658 947C1725 945 1773 925 1773 885C1773 830 1690 715 1643 637C1620 600 1592 560 1592 512C1592 465 1640 447 1707 447"/>
          </defs>
          <use href="#w1" class="wo"/><use href="#w1" class="wi"/>
          <use href="#w2" class="wo"/><use href="#w2" class="wi"/>
          <use href="#w3" class="wo"/><use href="#w3" class="wi"/>
          <use href="#w4" class="wo"/><use href="#w4" class="wi"/>
          <use href="#w5" class="wo"/><use href="#w5" class="wi"/>
          <use href="#w6" class="wo"/><use href="#w6" class="wi"/>
          <use href="#w7" class="wo"/><use href="#w7" class="wi"/>
          <use href="#w8" class="wo"/><use href="#w8" class="wi"/>
          <use href="#w9" class="wo"/><use href="#w9" class="wi"/>
          <use href="#w10" class="wo"/><use href="#w10" class="wi"/>
          <path class="ws" d="M1084 633C1150 633 1180 620 1259 620"/>
          <path class="ws" d="M1087 632C1097 637 1092 643 1083 650L1023 680L980 706C962 716 958 724 974 725"/>
          <path class="ws" d="M1259 641C1225 641 1215 660 1225 680C1240 715 1290 765 1291 790C1291 805 1275 810 1255 810"/>
          <path class="ws dark" d="M1163 799H1190"/>
          <path class="ws" d="M1156 830L1190 820"/>
          <path class="ws" d="M1156 830C1230 835 1270 890 1310 915C1330 925 1360 925 1391 925"/>
          <path class="ws" d="M1248 833L1305 890C1325 925 1350 947 1391 947"/>
        </svg>

        <svg class="ports" viewBox="955 246 965 784">
          <circle cx="1047" cy="392" r="4"/><circle cx="1047" cy="413" r="4"/><circle cx="1116" cy="402" r="4"/>
          <circle cx="1228" cy="402" r="4"/><circle cx="1295" cy="402" r="4"/>
          <circle cx="1045" cy="477" r="4"/><circle cx="1112" cy="477" r="4"/>
          <circle cx="1259" cy="599" r="4"/><circle cx="1259" cy="620" r="4"/><circle cx="1259" cy="641" r="4"/><circle cx="1328" cy="604" r="4"/><circle cx="1328" cy="636" r="4"/>
          <circle cx="1002" cy="632" r="4"/><circle cx="1084" cy="633" r="4"/>
          <circle cx="974" cy="725" r="4"/><circle cx="1172" cy="725" r="4"/>
          <circle cx="1163" cy="799" r="4"/><circle cx="1155" cy="830" r="4"/>
          <circle cx="1190" cy="799" r="4"/><circle cx="1190" cy="820" r="4"/><circle cx="1255" cy="810" r="4"/>
          <circle cx="1391" cy="925" r="4"/><circle cx="1391" cy="947" r="4"/><circle cx="1391" cy="968" r="4"/><circle cx="1657" cy="947" r="4"/>
          <circle cx="1414" cy="743" r="4"/><circle cx="1642" cy="743" r="4"/>
          <circle cx="1707" cy="426" r="4"/><circle cx="1707" cy="447" r="4"/>
        </svg>

        <div class="node n-edges">
          <div class="ins"><span>B</span><span>D</span></div>
          <div class="glyph"><svg class="g-book" viewBox="0 0 20 22"><path d="M1 4c3-3 7-3 9 0 2-3 6-3 9 0v16c-3-2-7-2-9 0-2-2-6-2-9 0z" fill="#f8a818" stroke="#222"/><path d="M10 19V6m-3 4l3-4 3 4" stroke="#111" stroke-width="1.8" fill="none"/></svg></div>
          <div class="outs"><span>E</span></div>
        </div>
        <div class="time t27">27ms</div>
        <div class="node n-box">
          <div class="ins"><span>B</span></div>
          <div class="glyph"><svg class="g-box" viewBox="0 0 20 24"><path d="M10 1l8 3-8 3-8-3z" fill="#f0801a" stroke="#c05000"/><path d="M2 12l8-4 8 4v7l-8 4-8-4z" fill="#e4e4e8" stroke="#555"/><path d="M2 12l8 4 8-4M10 16v7" stroke="#555" fill="none"/></svg></div>
          <div class="outs"><span>B</span></div>
        </div>
        <div class="time t110">110ms</div>
        <div class="node n-fz">
          <div class="ins"><span>F</span></div>
          <div class="glyph g-fz"><svg viewBox="0 0 10 18"><path d="M2 16L8 2" stroke="#111" stroke-width="1.8"/><path d="M5 3l4-2v5z" fill="#111"/><circle cx="2" cy="15.5" r="1.8" fill="#fff" stroke="#111"/></svg><b>Z</b></div>
          <div class="outs"><span>V</span></div>
        </div>
        <div class="node n-remap">
          <div class="ins"><span>V</span><span>S</span><span>T</span></div>
          <div class="glyph"><svg class="g-remap" viewBox="0 0 24 24"><rect x="1" y="1" width="22" height="6" fill="#111"/><path d="M4 2h3v4H4zM10.500 2h3v4h-3zM17 2h3v4h-3z" fill="#fff"/><path d="M1 7h22l-7 8H8z" fill="#18b868"/><rect x="1" y="17" width="22" height="5" fill="none" stroke="#222"/><path d="M4 17v5M7 17v5M10 17v5M13 17v5M16 17v5M19 17v5" stroke="#222"/></svg></div>
          <div class="outs"><span>R</span><span>C</span></div>
        </div>
        <div class="node n-bounds">
          <span class="pill"><svg viewBox="0 0 12 12"><path d="M6 1v8m-4-4l4 5 4-5" stroke="#777" stroke-width="2" fill="none"/></svg></span>
          <span class="nlabel">N</span>
          <div class="g-minmax"><span class="mm mm1">min</span><span class="mm mm2">max</span><i class="tick tick-a"></i><i class="tick tick-b"></i><i class="mm-bar"></i></div>
          <span class="nlabel">I</span>
        </div>
        <div class="panel p-small">
          <div class="phead">{0}</div>
          <div class="pbody">
            <div class="prow"><span class="pi pi-s">0</span><span class="pv">3.162278 To 15.620499</span></div>
          </div>
        </div>
        <div class="slider s-start"><span class="slabel">Domain start</span><span class="strack"><i class="sdia"></i><span>1</span></span></div>
        <div class="slider s-end"><span class="slabel">Domain end</span><span class="strack"><i class="sdia"></i><span>20</span></span></div>
        <div class="node n-dom">
          <div class="ins"><span>A</span><span>B</span></div>
          <div class="g-dom"><span>0</span><span>1</span><i class="tick tick-c"></i><i class="tick tick-d"></i><i class="dom-bar"></i></div>
          <div class="outs"><span>I</span></div>
        </div>
        <div class="panel p-big">
          <div class="phead">{0}</div>
          <i class="pscroll"></i>
          <div class="pbody">
            <div class="prow"><span class="pi">0</span><span class="pv">20</span></div>
            <div class="prow"><span class="pi">1</span><span class="pv">19.053678</span></div>
            <div class="prow"><span class="pi">2</span><span class="pv">18.172485</span></div>
            <div class="prow"><span class="pi">3</span><span class="pv">17.364547</span></div>
            <div class="prow"><span class="pi">4</span><span class="pv">16.638546</span></div>
            <div class="prow"><span class="pi">5</span><span class="pv">16.003484</span></div>
            <div class="prow"><span class="pi">6</span><span class="pv">15.468343</span></div>
            <div class="prow"><span class="pi">7</span><span class="pv">15.04163</span></div>
            <div class="prow"><span class="pi">8</span><span class="pv">14.730828</span></div>
            <div class="prow"><span class="pi">9</span><span class="pv">14.541822</span></div>
            <div class="prow"><span class="pi">10</span><span class="pv">18.84942</span></div>
            <div class="prow"><span class="pi">11</span><span class="pv">17.852924</span></div>
            <div class="prow"><span class="pi">12</span><span class="pv">16.920785</span></div>
            <div class="prow"><span class="pi">13</span><span class="pv">16.062055</span></div>
            <div class="prow"><span class="pi">14</span><span class="pv">15.286633</span></div>
          </div>
        </div>
        <div class="node n-grad">
          <div class="ins ins-grad"><span>L0</span><span>L1</span><span>t</span></div>
          <div class="gradbar"><i class="gradcorner"></i><i class="gradline"></i></div>
        </div>
        <div class="node n-prev">
          <div class="ins"><span>G</span><span>S</span></div>
          <div class="glyph"><svg class="g-prev" viewBox="0 0 26 22"><rect x="1" y="3" width="24" height="18" fill="#ccc" stroke="#333"/><rect x="1" y="1" width="12" height="3" fill="#2020d0"/><circle cx="16" cy="13" r="8.500" fill="url(#sball)"/></svg></div>
          <svg class="zig" viewBox="0 0 6 46"><path d="M1 0l4 4-4 4 4 4-4 4 4 4-4 4 4 4-4 4 4 4-4 4 4 4" fill="none" stroke="#444"/></svg>
        </div>
        <div class="time t14">14ms</div>

        <svg class="ports" viewBox="955 246 965 784">
          <circle cx="1415" cy="947" r="3"/><circle cx="1515" cy="947" r="3"/><circle cx="1646" cy="947" r="3"/>
        </svg>
      </div>
    </section>
  </div>

  <footer class="taskbar">
    <span class="tk"><svg viewBox="0 0 20 20"><path d="M0 3l8-1v7.500H0zM9 2l11-2v9.500H9zM0 10.500h8V18l-8-1zM9 10.500h11V20L9 18z" fill="#fff"/></svg></span>
    <span class="tk"><svg viewBox="0 0 20 20"><circle cx="10" cy="10" r="8" fill="none" stroke="#fff" stroke-width="2.4"/></svg></span>
    <span class="tk"><svg viewBox="0 0 20 20"><path d="M1 4h12M1 16h12M3 7h9v6H3zM16 1v4M16 8v4M16 15v4" fill="none" stroke="#fff" stroke-width="1.3"/></svg></span>
    <span class="tk app"><svg viewBox="0 0 28 28"><circle cx="9" cy="9" r="8" fill="#00aff0"/><circle cx="19" cy="19" r="8" fill="#00aff0"/><circle cx="14" cy="14" r="11" fill="#00aff0"/><text x="14" y="21" class="skype">S</text></svg></span>
    <span class="tk app"><svg viewBox="0 0 28 28"><circle cx="14" cy="15" r="12" fill="#e66000"/><path d="M14 1c7 2 12 8 12 14 0 7-6 12-12 12 6-3 7-8 5-12-1-3-5-6-5-14z" fill="#ffb000"/><circle cx="13" cy="15" r="6" fill="#2a2a70"/><path d="M3 18C2 10 6 5 11 3c-1 3 0 4 2 5-3 0-6 2-5 6 1 5 7 7 11 4-3 6-14 6-16 0z" fill="#e82030"/></svg></span>
    <span class="tk app"><svg viewBox="0 0 28 28"><path d="M1 5h10l2 3h14v18H1z" fill="#f6d468"/><path d="M1 5h10v4H1z" fill="#e3b23c"/><rect x="8" y="16" width="12" height="10" fill="#4aa3df"/><rect x="11" y="20" width="6" height="6" fill="#f6d468"/></svg></span>
    <span class="tk app"><svg viewBox="0 0 28 28"><rect x="3" y="1" width="22" height="27" fill="#fff"/><path d="M25 13v15H13z" fill="#222"/></svg></span>
    <span class="tk app"><svg viewBox="0 0 28 28"><circle cx="14" cy="14" r="14" fill="#6e3f98"/><circle cx="14" cy="11" r="7.500" fill="#fff"/><path d="M9 16h10v10H9z" fill="#fff"/><circle cx="14" cy="11" r="5" fill="#6e3f98"/><path d="M7 5l3 3M21 5l-3 3" stroke="#fff" stroke-width="2.4"/></svg></span>
    <span class="tk app"><svg viewBox="0 0 28 28"><circle cx="14" cy="14" r="14" fill="#53a67a"/><g fill="none" stroke="#fff" stroke-width="1.100"><ellipse cx="14" cy="14" rx="10" ry="4"/><ellipse cx="14" cy="14" rx="10" ry="4" transform="rotate(60 14 14)"/><ellipse cx="14" cy="14" rx="10" ry="4" transform="rotate(120 14 14)"/></g><circle cx="14" cy="14" r="2" fill="#fff"/></svg></span>
    <span class="tk app running"><svg viewBox="0 0 30 32"><rect width="30" height="32" fill="#111"/><path d="M3 6l6-5 3 10 6-1-1 6 8 5-6 8-6-5-4 6-4-8 5-4-5-3-3-5z" fill="#eee"/><text x="23" y="12" class="rh6">6</text></svg></span>
    <div class="tray">
      <span class="ti"><svg viewBox="0 0 18 10"><path d="M1 9l8-8 8 8" fill="none" stroke="#ddd" stroke-width="1.200"/></svg></span>
      <span class="ti"><svg viewBox="0 0 20 18"><path d="M5 1l5 3-5 3-5-3zM15 1l5 3-5 3-5-3zM5 8l5 3-5 3-5-3zM15 8l5 3-5 3-5-3zM10 12l5 3-5 3-5-3z" fill="#fff"/></svg></span>
      <span class="ti"><svg viewBox="0 0 20 20"><path d="M4 0c4-1 9 0 12 4 4 4 4 9 2 13-3 3-7 3-11 2C3 18 1 14 0 9 0 5 1 2 4 0z" fill="#7cb51e"/><path d="M6 10l3 3 5-5" fill="none" stroke="#fff" stroke-width="1.800"/></svg></span>
      <span class="ti"><svg viewBox="0 0 22 14"><path d="M6 2h15v10H6z" fill="#fff"/><path d="M21 5h1v4h-1z" fill="#ddd"/><path d="M0 7h6M2 2v3h3V2z" fill="none" stroke="#ddd"/></svg></span>
      <span class="ti"><svg viewBox="0 0 20 18"><path d="M1 16C2 8 8 2 17 1M6 16c1-5 5-9 11-10M11 16c1-3 3-5 6-5" fill="none" stroke="#bbb"/><circle cx="15" cy="15" r="2" fill="#fff"/></svg></span>
      <span class="ti"><svg viewBox="0 0 22 18"><path d="M1 6h3l5-4v14l-5-4H1z" fill="none" stroke="#ddd"/><path d="M12 7c1 1 1 3 0 4" fill="none" stroke="#ddd"/><path d="M15 4c2 3 2 7 0 10M18 2c3 4 3 10 0 14" fill="none" stroke="#777"/></svg></span>
      <div class="clock"><span>12:17</span><span>05/07/2018</span></div>
      <span class="ti ti-note"><svg viewBox="0 0 20 18"><path d="M1 1h18v13h-7l-2 2-2-2H1z" fill="none" stroke="#fff"/></svg></span>
    </div>
  </footer>
</div>
<script src="script.js"></script>
</body>
</html>
```
FILE: styles.css
```css
* { box-sizing: border-box; }
html, body { margin: 0; padding: 0; }
body { width: 1920px; height: 1080px; overflow: hidden; font-family: "Open Sans", "Noto Sans", sans-serif; color: #1b1b1b; background: #333; }
.defs { position: absolute; }
i { font-style: normal; display: block; }
.screen { display: flex; flex-direction: column; width: 1920px; height: 1080px; }
.windows { display: flex; height: 1030px; }
.taskbar { display: flex; height: 50px; background: #2e2e2e; }

/* Rhino */
.rhino { width: 953px; display: flex; flex-direction: column; background: #eaecf0; font-size: 14px; }
.titlebar { height: 30px; display: flex; align-items: center; gap: 5px; padding-left: 3px; background: #fff; font-size: 14.2px; }
.appicon { width: 19px; height: 20px; }
.menu { height: 22px; display: grid; grid-template-columns: 37px 40px 46px 51px 63px 48px 50px 84px 80px 49px 66px 61px 55px 60px; padding-left: 7px; background: #fff; align-items: center; font-size: 14px; }
.cmdwrap { padding: 5px 0 8px 8px; }
.cmd { height: 62px; background: #fff; font-size: 14.2px; padding-left: 2px; }
.cmdline { height: 19px; line-height: 19px; }
.cmdline-last { border-bottom: 1px solid #b8bcc8; margin-left: -2px; padding-left: 2px; height: 20px; }
.cmdprompt { height: 23px; display: flex; align-items: center; gap: 3px; }
.caret { width: 1px; height: 18px; background: #000; }
.tabs { height: 24px; display: grid; grid-template-columns: 92px 80px 85px 80px 73px 135px 87px 97px 107px 117px; padding-left: 8px; overflow: hidden; }
.tab { display: flex; align-items: center; justify-content: center; background: linear-gradient(#e4e6ea, #d8dade); border-right: 1px solid #c4c6cc; border-radius: 5px 9px 0 0; white-space: nowrap; font-size: 14px; }
.tab.active { background: #eef0f4; }
.stdbar { height: 39px; display: flex; gap: 4px; padding: 1px 0 0 11px; }
.ic { position: relative; display: block; width: 24px; height: 24px; flex: none; }
.stdbar .ic { margin-top: 3px; }
.ic svg { display: block; width: 24px; height: 24px; fill: none; stroke: #333; stroke-width: 1; }
.fly::after { content: ""; position: absolute; right: -3px; bottom: -1px; border-style: solid; border-width: 0 0 6px 6px; border-color: transparent transparent #777 transparent; }
.helpq { font: bold 19px "Liberation Sans", sans-serif; fill: #fff; stroke: none; }
.midrow { display: flex; height: 727px; }
.sidebar { width: 65px; display: grid; grid-template-columns: 27px 27px; grid-auto-rows: 28px; padding: 12px 0 0 3px; background: #eaecf0; justify-items: start; align-content: start; }
.viewport { position: relative; width: 888px; height: 727px; background: linear-gradient(#bdbdbd, #c9c9c9 9%, #cbcbcb); overflow: hidden; }
.scene { display: block; width: 888px; height: 727px; }
.vp-tab { position: absolute; left: 0; top: 0; width: 113px; height: 23px; display: flex; align-items: center; background: #8fabcb; border-radius: 0 0 4px 0; font-weight: 700; font-size: 14px; padding-left: 9px; color: #101820; }
.vp-tab span:first-child { width: 90px; }
.vp-drop { width: 14px; height: 20px; border-left: 1px solid #000; position: relative; }
.vp-drop::after { content: ""; position: absolute; left: 2px; top: 7px; border-style: solid; border-width: 6px 5px 0; border-color: #111 transparent transparent; }
.viewtabs { height: 26px; display: grid; grid-template-columns: 99px 47px 56px 57px 37px; padding-left: 64px; }
.vtab { display: flex; align-items: center; justify-content: center; background: #cfd1d5; border-radius: 0 0 6px 6px; font-size: 14px; }
.vtab.active { background: #eaecf0; border-left: 1px solid #c8cad0; border-bottom: 1px solid #c8cad0; border-right: 1px solid #c8cad0; }
.vtab-plus { background: #eaecf0; color: #888; font-size: 18px; border: 1px solid #d4d6da; border-top: 0; }
.osnap { height: 65px; display: grid; grid-template-columns: 53px 60px 62px 54px 53px 45px 58px 52px 65px 58px 71px 85px 80px; padding: 9px 0 0 11px; align-content: start; font-size: 14px; }
.snap { display: flex; align-items: center; gap: 3px; height: 24px; white-space: nowrap; }
.snap::before { content: ""; width: 16px; height: 16px; border: 1px solid #b4b4b4; background: #eef0f4; font-size: 13px; line-height: 14px; text-align: center; color: #333; flex: none; }
.snap.on::before { content: "\2713"; border-color: #444; background: #fff; font-family: "DejaVu Sans", sans-serif; }
.status { height: 22px; display: grid; grid-template-columns: 59px 108px 108px 109px 107px 208px 81px 55px 57px 61px; background: #eaecf0; border-top: 1px solid #c8cbd4; font-size: 14px; }
.st { display: flex; align-items: center; justify-content: center; border-right: 1px solid #d4d6dc; white-space: nowrap; }
.st-on { background: #dfeefa; }
.st-layer { justify-content: flex-start; padding-left: 3px; gap: 3px; }
.swatch { width: 14px; height: 14px; background: #000; }

/* Grasshopper */
.gh { flex: 1; display: flex; flex-direction: column; border-left: 2px solid #9e9e9e; background: #f0f0f0; min-width: 0; }
.gh-title { height: 38px; line-height: 37px; padding-left: 8px; background: #fff; color: #808080; font-size: 14px; border-top: 1px solid #aaa; }
.gh-menu { height: 34px; display: grid; grid-template-columns: 44px 47px 53px 70px 76px 60px; padding-left: 13px; align-items: center; font-size: 14px; background: linear-gradient(#f2f2f2, #ededed); }
.gh-tabs { height: 28px; display: grid; grid-template-columns: 53px 49px 40px 44px 40px 37px 45px 35px 47px 51px 39px 60px 39px 73px 35px 35px 35px 38px 34px 35px 35px 35px 30px; align-items: center; font-size: 12.2px; color: #757575; white-space: nowrap; }
.gh-tab.active { height: 28px; width: 45px; display: flex; align-items: center; justify-content: center; background: #fff; color: #111; border: 1px solid #bbb; border-bottom: 0; border-radius: 8px 8px 0 0; padding-right: 3px; }
.ribbon { height: 107px; display: flex; gap: 5px; padding: 2px 0 0 2px; background: linear-gradient(#d4d4d4, #ececec 50%, #f2f2f2); border-top: 1px solid #bbb; border-bottom: 2px solid #a8a8a8; }
.rpanel { height: 91px; display: flex; flex-direction: column; border: 1px solid #c8c8c8; border-bottom: 0; border-radius: 7px 7px 5px 5px; background: linear-gradient(#d8d8d8, #e8e8e8); overflow: hidden; }
.rp-geo { width: 274px; } .rp-pri { width: 120px; } .rp-inp { width: 216px; } .rp-utl { width: 284px; margin-left: -1px; }
.rbody { flex: 1; display: flex; gap: 12px; padding: 1px 0 0 1px; }
.rgroup { display: grid; grid-auto-flow: column; grid-template-rows: 34px 34px; grid-auto-columns: 35px; }
.ri { width: 35px; height: 34px; display: flex; align-items: center; justify-content: center; }
.ri svg { width: 30px; height: 32px; fill: none; }
.hxt { font: bold 20px "Liberation Serif", serif; fill: #fff; text-anchor: middle; }
.hxs { font-size: 13px; }
.rlabel { height: 18px; line-height: 15px; background: linear-gradient(#444, #111); color: #eee; text-align: center; font-size: 12px; position: relative; padding-right: 12px; }
.rlabel::after { content: "\25BE"; position: absolute; right: 3px; top: 0; color: #888; font-size: 10px; }
.gh-tools { height: 39px; display: flex; align-items: center; padding-left: 3px; background: #f0f0f0; }
.tool { flex: none; }
.t-open { width: 26px; height: 30px; margin-left: 2px; }
.t-save { width: 28px; height: 30px; margin-left: 8px; }
.combo { width: 180px; height: 28px; margin-left: 13px; display: flex; align-items: center; justify-content: space-between; padding: 0 7px 0 3px; background: #fff; border: 1px solid #6e6e6e; font-size: 14px; }
.combo svg { width: 10px; height: 6px; }
.t-fit { width: 28px; height: 30px; margin-left: 7px; }
.t-eye { width: 28px; height: 26px; margin-left: 13px; }
.t-brush { width: 28px; height: 30px; margin-left: 12px; }
.t-bin { width: 24px; height: 30px; }
.tdrop { width: 0; height: 0; margin-left: 6px; border-style: solid; border-width: 3px 2.5px 0; border-color: #333 transparent transparent; }
.tsep { width: 1px; height: 28px; background: #ccc; margin: 0 6px 0 5px; }
.canvas { position: relative; flex: 1; background-color: #d4d0c8; background-image: linear-gradient(90deg, #bcb8b0 1px, transparent 1px), linear-gradient(#c2beb6 1px, transparent 1px); background-size: 159px 100%, 100% 53px; background-position: 82px 0, 0 44px; overflow: hidden; }
.toast { position: absolute; left: 478px; top: 15px; width: 288px; height: 26px; line-height: 26px; text-align: center; font-size: 14px; padding-right: 24px; background: #d8d4cc; color: #c6c2ba; }
.group { position: absolute; left: 0; top: 330px; width: 698px; height: 315px; background: rgba(255,255,255,.6); border-right: 1px solid #e2dfd8; border-bottom: 1px solid #e2dfd8; }
.tooltip { position: absolute; left: 198px; top: 305px; width: 268px; height: 19px; background: #fff; border: 1px solid #333; font: 10.3px/17px "DejaVu Sans", sans-serif; text-align: center; white-space: nowrap; }
.tooltip-tip { position: absolute; left: 130px; bottom: -6px; width: 7px; height: 7px; border-right: 1px solid #333; border-bottom: 1px solid #333; background: #e8e8e2; transform: rotate(45deg) scale(.9); }
.wires, .ports { position: absolute; left: 0; top: 0; width: 965px; height: 784px; }
.wires path { fill: none; }
.wo { fill: none; stroke: #5a5a56; stroke-width: 4; }
.wi { fill: none; stroke: #c8c6c0; stroke-width: 1; }
.ws { stroke: #676764; stroke-width: 3; }
.ws.dark { stroke: #333; }
.ports circle { fill: #fff; stroke: #000; stroke-width: 2.2; }
.node { position: absolute; display: flex; align-items: stretch; background: linear-gradient(#d4d4d6, #bcbcc2 12%, #a5a5b3 24%, #a5a5b3 78%, #9292a0); border: 1px solid #3c3c3c; border-radius: 4px; font: 12px "DejaVu Sans", sans-serif; color: #2c2c2c; }
.ins, .outs { display: flex; flex-direction: column; justify-content: space-around; padding: 0 8px; align-items: center; }
.outs { padding: 0 10px 0 6px; }
.glyph { flex: 1; display: flex; align-items: center; justify-content: center; min-width: 0; }
.n-edges { left: 92px; top: 133px; width: 69px; height: 47px; }
.g-book { width: 20px; height: 22px; flex: none; }
.n-box { left: 273px; top: 142px; width: 67px; height: 29px; }
.g-box { width: 18px; height: 24px; flex: none; }
.n-fz { left: 90px; top: 216px; width: 67px; height: 29px; }
.g-fz svg { width: 11px; height: 18px; flex: none; }
.g-fz b { font: bold 16px "DejaVu Sans", sans-serif; }
.n-remap { left: 304px; top: 340px; width: 69px; height: 68px; }
.g-remap { width: 24px; height: 24px; flex: none; }
.n-bounds { left: 47px; top: 372px; width: 82px; height: 30px; align-items: center; padding-left: 3px; gap: 5px; }
.pill { width: 14px; height: 14px; background: #ddd; border: 1px solid #666; border-radius: 3px; display: block; flex: none; }
.pill svg { display: block; width: 12px; height: 12px; }
.nlabel { flex: none; }
.g-minmax { position: relative; width: 28px; height: 26px; }
.mm { position: absolute; font: bold 8px "DejaVu Sans", sans-serif; line-height: 8px; }
.mm1 { left: 0; top: 0; } .mm2 { left: 10px; top: 6px; }
.mm-bar { position: absolute; left: 4px; top: 20px; width: 19px; height: 5px; background: #1dbd7a; border-left: 1px solid #111; border-right: 1px solid #111; }
.tick { position: absolute; width: 1px; background: #222; }
.tick-a { left: 5px; top: 8px; height: 12px; }
.tick-b { left: 21px; top: 14px; height: 6px; }
.tick-c { left: 2px; top: 18px; height: 11px; }
.tick-d { left: 14px; top: 18px; height: 11px; }
.n-dom { left: 235px; top: 541px; width: 65px; height: 46px; }
.g-dom { position: relative; flex: 1; display: flex; justify-content: center; gap: 5px; padding-top: 7px; font: bold 10px "DejaVu Sans", sans-serif; }
.dom-bar { position: absolute; left: 0; top: 29px; width: 16px; height: 5px; background: #1dbd7a; border-left: 1px solid #111; border-right: 1px solid #111; }
.n-grad { left: 436px; top: 667px; width: 265px; height: 68px; padding-right: 8px; }
.ins-grad { width: 23px; padding: 0 3px 0 0; align-items: flex-end; flex: none; font-size: 12px; color: #555; }
.gradbar { position: relative; flex: 1; margin: 2px 0; background: linear-gradient(90deg, #ff7c2a, #ff7c3c 8%, #ff7fa0 45%, #f45e88 62%, #e6204f 82%, #e2002e); box-shadow: inset 0 0 7px 1px rgba(60,0,0,.55); }
.gradcorner { position: absolute; left: 0; top: 0; width: 14px; height: 14px; background: conic-gradient(from 90deg, #f0e040, #60c030); border: 1px solid #3a3a20; border-left: 0; border-top: 0; border-radius: 0 0 14px 0; }
.gradline { position: absolute; left: 0; right: 0; top: 31px; height: 1px; background: #fff; opacity: .9; }
.n-prev { left: 752px; top: 168px; width: 53px; height: 46px; background: linear-gradient(#dedede, #c0c0c0); border-right: 0; border-radius: 4px 0 0 4px; }
.n-prev .ins { padding: 0 2px 0 8px; }
.g-prev { width: 26px; height: 22px; flex: none; }
.zig { width: 6px; height: 46px; flex: none; }
.time { position: absolute; display: flex; align-items: center; justify-content: center; border: 1px solid #444; font: 12px "DejaVu Sans", sans-serif; color: #222; }
.t27 { left: 92px; top: 181px; width: 69px; height: 15px; background: linear-gradient(#e0e0c4, #b8b898); }
.t110 { left: 273px; top: 172px; width: 67px; height: 16px; background: linear-gradient(#f8a818, #e08000); }
.t14 { left: 752px; top: 215px; width: 49px; height: 17px; background: linear-gradient(#d8d8d8, #bbb); }
.panel { position: absolute; background: #fff; border: 1px solid #444; border-radius: 3px; font: 11.7px "Liberation Mono", monospace; color: #222; overflow: hidden; }
.phead { height: 20px; line-height: 18px; background: #cdcdcd; text-align: right; padding-right: 14px; }
.p-small { left: 19px; top: 435px; width: 198px; height: 89px; }
.p-big { left: 459px; top: 361px; width: 228px; height: 273px; }
.pbody { position: relative; }
.p-small .pbody { height: 71px; margin-top: -2px; background: linear-gradient(90deg, transparent 14px, #ddd 14px, #ddd 15px, transparent 15px); }
.p-big .pbody { width: 226px; margin-top: -3px; background: linear-gradient(90deg, transparent 27px, #ddd 27px, #ddd 28px, transparent 28px); }
.prow { display: flex; height: 17px; align-items: center; }
.p-big .prow:nth-child(even) { background-color: #f3f3f3; }
.pi { width: 25px; text-align: right; flex: none; }
.pi-s { width: 11px; }
.pv { margin-left: 5px; white-space: nowrap; }
.pi-s + .pv { margin-left: 6px; }
.p-small .prow { height: 15px; }
.pscroll { position: absolute; right: 0; top: 1px; width: 7px; height: 41px; background: #9a9a9a; border-radius: 2px; z-index: 1; }
.slider { position: absolute; display: flex; height: 21px; border: 1px solid #555; border-radius: 3px; font: 11.5px "DejaVu Sans", sans-serif; color: #222; background: linear-gradient(#d2d2d2, #b4b4b4); overflow: hidden; }
.s-start { left: -35px; top: 542px; width: 242px; }
.s-end { left: -44px; top: 573px; width: 243px; }
.slabel { display: block; background: linear-gradient(#b8b8c4, #9c9cac); border-right: 1px solid #444; text-align: right; white-space: nowrap; line-height: 19px; padding-right: 7px; flex: none; }
.s-start .slabel { width: 97px; }
.s-end .slabel { width: 100px; }
.strack { flex: 1; display: flex; align-items: center; gap: 6px; background-image: repeating-linear-gradient(90deg, #9a9a9a 0, #9a9a9a 1px, transparent 1px, transparent 21px); background-size: 100% 5px; background-repeat: no-repeat; background-position: 10px 6px; }
.s-start .strack { padding-left: 20px; }
.s-end .strack { padding-left: 31px; }
.sdia { width: 7px; height: 7px; background: #fff; border: 2px solid #111; transform: rotate(45deg); flex: none; }

/* Taskbar */
.tk { position: relative; width: 60px; height: 50px; display: flex; align-items: center; justify-content: center; flex: none; }
.tk svg { width: 20px; height: 20px; }
.tk.app { width: 62px; }
.tk:not(.app) + .app { margin-left: 3px; }
.tk.app svg { width: 28px; height: 28px; }
.tk.app::after { content: ""; position: absolute; left: 5px; right: 5px; bottom: 0; height: 3px; background: #76b9ed; }
.tk.running { background: #575757; }
.tk.running::after { left: 0; right: 0; }
.tk.running svg { width: 30px; height: 32px; }
.skype { font: bold 18px "Liberation Sans", sans-serif; fill: #fff; text-anchor: middle; }
.rh6 { font: 11px "Liberation Sans", sans-serif; fill: #fff; text-anchor: middle; }
.tray { margin-left: auto; display: flex; align-items: center; padding-right: 16px; color: #fff; }
.ti { width: 30px; height: 50px; display: flex; align-items: center; justify-content: center; flex: none; }
.ti svg { width: 18px; height: 18px; }
.ti-note { width: 50px; }
.ti-note svg { width: 20px; height: 20px; }
.clock { width: 92px; display: flex; flex-direction: column; align-items: center; font-size: 13.5px; line-height: 22px; color: #f0f0f0; }
```
FILE: script.js
```js
(function () {
  var NS = 'http://www.w3.org/2000/svg';
  var svg = document.getElementById('scene');
  var defs = add(svg, 'defs', {});

  function add(parent, tag, attrs) {
    var node = document.createElementNS(NS, tag);
    for (var k in attrs) node.setAttribute(k, attrs[k]);
    parent.appendChild(node);
    return node;
  }

  // Floor grid: perspective projection from two vanishing points
  var V1 = [6189, -655], V2 = [70, -620], O = [625, 600], A = 0.0026, B = 0.01012;
  function proj(x, y) {
    var w = 1 + x * A + y * B;
    return [(O[0] + x * A * V1[0] + y * B * V2[0]) / w, (O[1] + x * A * V1[1] + y * B * V2[1]) / w];
  }
  function seg(x1, y1, x2, y2) {
    var p = proj(x1, y1), q = proj(x2, y2);
    return 'M' + p[0].toFixed(1) + ' ' + p[1].toFixed(1) + 'L' + q[0].toFixed(1) + ' ' + q[1].toFixed(1);
  }
  var thin = '', major = '';
  for (var n = -50; n <= 50; n++) {
    var d = seg(n, -50, n, 50) + seg(-50, n, 50, n);
    if (n % 5 === 0) major += d; else thin += d;
  }
  add(svg, 'path', { d: thin, fill: 'none', stroke: '#a4a4a4', 'stroke-width': 0.9 });
  add(svg, 'path', { d: major, fill: 'none', stroke: '#808080', 'stroke-width': 1 });
  add(svg, 'path', { d: seg(-50, 0, 0, 0), fill: 'none', stroke: '#a85454', 'stroke-width': 2 });
  add(svg, 'path', { d: seg(0, -50, 0, 0), fill: 'none', stroke: '#3f9a4e', 'stroke-width': 2 });

  // Axis widget
  add(svg, 'path', { d: 'M109 873V845M109 873L84 880M109 873L124 895', fill: 'none', stroke: '#666', 'stroke-width': 1 });
  [['z', 116, 846], ['x', 81, 884], ['y', 129, 896]].forEach(function (t) {
    var node = add(svg, 'text', { x: t[1], y: t[2], 'font-family': 'Liberation Sans, sans-serif', 'font-size': 15, fill: '#777', 'text-anchor': 'middle' });
    node.textContent = t[0];
  });

  // Extruded cylinders: a 10 x 10 array interpolated from its four corners
  function z(p) { return [420 + p[0] / 3, 300 + p[1] / 3]; }
  var tops = [z([290, 1230]), z([690, 575]), z([128, 530]), z([540, 100])];
  var bases = [z([290, 1265]), z([725, 1165]), z([225, 1060]), z([665, 990])];
  function bil(c, u, v) {
    return [
      c[0][0] * (1 - u) * (1 - v) + c[1][0] * u * (1 - v) + c[2][0] * (1 - u) * v + c[3][0] * u * v,
      c[0][1] * (1 - u) * (1 - v) + c[1][1] * u * (1 - v) + c[2][1] * (1 - u) * v + c[3][1] * u * v
    ];
  }
  function mix(a, b, t) { return [a[0] + (b[0] - a[0]) * t, a[1] + (b[1] - a[1]) * t, a[2] + (b[2] - a[2]) * t]; }
  function colour(t) {
    return t < 0.5 ? mix([255, 132, 42], [255, 124, 162], t * 2) : mix([255, 124, 162], [232, 0, 48], (t - 0.5) * 2);
  }
  function css(c, k) { return 'rgb(' + Math.round(c[0] * k) + ',' + Math.round(c[1] * k) + ',' + Math.round(c[2] * k) + ')'; }

  var mark = [471, 743], i, j, fan = '';
  for (i = 0; i < 10; i++) for (j = 0; j < 10; j++) {
    var bp = bil(bases, i / 9, j / 9);
    fan += 'M' + mark[0] + ' ' + mark[1] + 'L' + bp[0].toFixed(1) + ' ' + bp[1].toFixed(1);
  }
  add(svg, 'path', { d: fan, stroke: '#a20000', 'stroke-width': 1.3, fill: 'none' });
  add(svg, 'path', { d: 'M471 743L520 719L666 690L530 720Z', fill: '#a20000' });

  var R = 8.6, RY = 6.4;
  for (j = 9; j >= 0; j--) for (i = 9; i >= 0; i--) {
    var t = bil(tops, i / 9, j / 9), b = bil(bases, i / 9, j / 9);
    var f = Math.sqrt(i * i + 0.64 * j * j) / 11.53;
    var c = colour(f);
    var len = Math.hypot(b[0] - t[0], b[1] - t[1]) || 1;
    var px = (b[1] - t[1]) / len, py = -(b[0] - t[0]) / len;
    var id = 'cy' + i + '_' + j;
    var g = add(defs, 'linearGradient', { id: id, gradientUnits: 'userSpaceOnUse', x1: t[0] - px * R, y1: t[1] - py * R, x2: t[0] + px * R, y2: t[1] + py * R });
    add(g, 'stop', { offset: 0, 'stop-color': css(c, 0.96) });
    add(g, 'stop', { offset: 0.55, 'stop-color': css(c, 0.8) });
    add(g, 'stop', { offset: 1, 'stop-color': css(c, 0.3) });
    add(svg, 'path', {
      d: 'M' + (t[0] - R) + ' ' + t[1] + 'L' + (b[0] - R) + ' ' + b[1] + 'A' + R + ' ' + RY + ' 0 0 0 ' + (b[0] + R) + ' ' + b[1] + 'L' + (t[0] + R) + ' ' + t[1] + 'Z',
      fill: 'url(#' + id + ')'
    });
    add(svg, 'ellipse', { cx: t[0], cy: t[1], rx: R, ry: RY, fill: css(c, 1) });
  }

  // Point markers
  [[471, 743], [709, 785]].forEach(function (m) {
    var d = 'M' + (m[0] - 4) + ' ' + (m[1] - 4) + 'L' + (m[0] + 4) + ' ' + (m[1] + 4) + 'M' + (m[0] + 4) + ' ' + (m[1] - 4) + 'L' + (m[0] - 4) + ' ' + (m[1] + 4);
    add(svg, 'path', { d: d, stroke: '#a20000', 'stroke-width': 3.4, fill: 'none' });
  });
})();
```
